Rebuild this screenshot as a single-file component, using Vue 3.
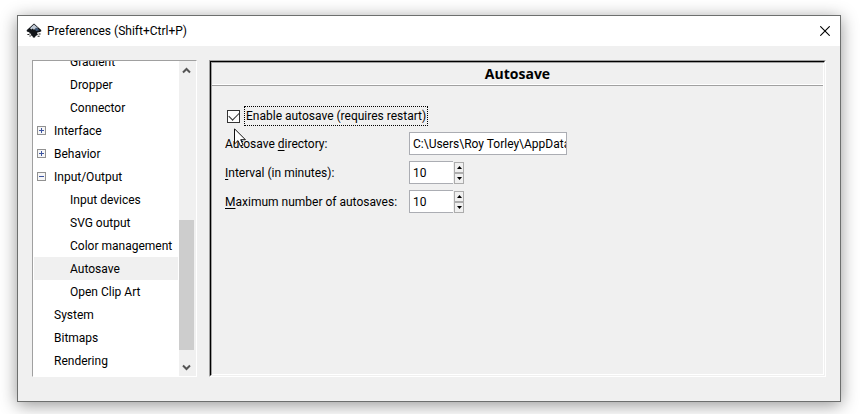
<script setup>
import { ref } from 'vue'

const items = [
  { label: 'Gradient', level: 1 },
  { label: 'Dropper', level: 1 },
  { label: 'Connector', level: 1 },
  { label: 'Interface', level: 0, state: 'closed' },
  { label: 'Behavior', level: 0, state: 'closed' },
  { label: 'Input/Output', level: 0, state: 'open' },
  { label: 'Input devices', level: 1 },
  { label: 'SVG output', level: 1 },
  { label: 'Color management', level: 1 },
  { label: 'Autosave', level: 1 },
  { label: 'Open Clip Art', level: 1 },
  { label: 'System', level: 0 },
  { label: 'Bitmaps', level: 0 },
  { label: 'Rendering', level: 0 },
]
const selected = ref('Autosave')
const enabled = ref(true)
const directory = ref('C:\\Users\\Roy Torley\\AppData\\Local')
const interval = ref('10')
const maximum = ref('10')

function step(target, delta) {
  target.value = String(Math.max(1, Number(target.value) + delta))
}
const stepInterval = (d) => step(interval, d)
const stepMaximum = (d) => step(maximum, d)
</script>

<template>
  <div class="desktop">
    <main class="window">
      <header class="titlebar">
        <svg class="logo" viewBox="0 0 16 16" aria-hidden="true">
          <path d="M8 0.4 L15.2 7 Q16 8.4 14 8.9 L11.4 9.6 Q10.4 10.3 11.6 10.8 Q12.6 11.6 11 12.2 L9.6 13 Q9.4 14.4 8 14.8 Q6.4 14.4 6.4 13 L4.6 12.2 Q4.6 11.4 5.4 11 L2.6 10 Q3 9.4 4.2 9.2 L1.4 8.8 Q0 8.2 0.9 7 Z" fill="#111418" />
          <path d="M8 1.4 L12 5.1 L10.4 6.2 L9.2 5.4 L8 7 L6.8 5.6 L5.4 6.6 L4 5.2 Z" fill="#c3ccd8" />
          <path d="M10 4.2 L13.6 7.3 L10.2 8 L9 6.6 Z" fill="#405878" />
          <path d="M1.4 11h2v1h-2zM3.4 12.6h1.4v1H3.4zM12.6 10.6h2v1h-2zM11.6 12.8h2v1h-2z" fill="#222" />
        </svg>
        <h1>Preferences (Shift+Ctrl+P)</h1>
        <button class="close" type="button" aria-label="Close">
          <svg viewBox="0 0 10 10"><path d="M0.3 0.3 L9.7 9.7 M9.7 0.3 L0.3 9.7" stroke="#000" stroke-width="1.1" fill="none" /></svg>
        </button>
      </header>

      <div class="body">
        <nav class="sidebar">
          <div class="tree">
            <button
              v-for="item in items"
              :key="item.label"
              type="button"
              class="row"
              :class="{ child: item.level, selected: item.label === selected }"
              @click="selected = item.label"
            >
              <span class="toggle">
                <svg v-if="item.state" viewBox="0 0 9 9">
                  <rect x="0.5" y="0.5" width="8" height="8" fill="#f6f6f6" stroke="#919191" />
                  <path :d="item.state === 'open' ? 'M2 4.5h5' : 'M2 4.5h5M4.5 2v5'" stroke="#3c54a0" />
                </svg>
              </span>
              <span>{{ item.label }}</span>
            </button>
          </div>
          <div class="scrollbar">
            <button type="button" class="arrow" aria-label="Scroll up">
              <svg viewBox="0 0 9 7"><path d="M1 5.5 L4.5 2 L8 5.5" stroke="#555" stroke-width="2" fill="none" /></svg>
            </button>
            <div class="track"><div class="thumb"></div></div>
            <button type="button" class="arrow" aria-label="Scroll down">
              <svg viewBox="0 0 9 7"><path d="M1 1.5 L4.5 5 L8 1.5" stroke="#555" stroke-width="2" fill="none" /></svg>
            </button>
          </div>
        </nav>

        <section class="panel">
          <div class="inner">
            <h2>Autosave</h2>
            <form class="form" @submit.prevent>
              <div class="check">
                <input id="enable" v-model="enabled" type="checkbox" />
                <label for="enable">Enable autosave (requires restart)</label>
                <svg class="pointer" viewBox="0 0 13 19" aria-hidden="true">
                  <path d="M0.5 0.8 V16 L4 12.6 L6.4 18 L9 16.9 L6.7 11.7 H11.4 Z" fill="#fff" stroke="#111" />
                </svg>
              </div>
              <div class="fields">
                <label for="dir">Autosave <u>d</u>irectory:</label>
                <input id="dir" v-model="directory" class="entry" type="text" />

                <label for="interval"><u>I</u>nterval (in minutes):</label>
                <div class="spin">
                  <input id="interval" v-model="interval" class="entry" type="text" />
                  <div class="steps">
                    <button type="button" aria-label="Increase interval" @click="stepInterval(1)"><svg viewBox="0 0 5 3"><path d="M0 3h5L2.5 0z" /></svg></button>
                    <button type="button" aria-label="Decrease interval" @click="stepInterval(-1)"><svg viewBox="0 0 5 3"><path d="M0 0h5L2.5 3z" /></svg></button>
                  </div>
                </div>

                <label for="maximum"><u>M</u>aximum number of autosaves:</label>
                <div class="spin">
                  <input id="maximum" v-model="maximum" class="entry" type="text" />
                  <div class="steps">
                    <button type="button" aria-label="Increase maximum" @click="stepMaximum(1)"><svg viewBox="0 0 5 3"><path d="M0 3h5L2.5 0z" /></svg></button>
                    <button type="button" aria-label="Decrease maximum" @click="stepMaximum(-1)"><svg viewBox="0 0 5 3"><path d="M0 0h5L2.5 3z" /></svg></button>
                  </div>
                </div>
              </div>
            </form>
          </div>
        </section>
      </div>
    </main>
  </div>
</template>

<style>
body {
  background: #fff;
}
</style>

<style scoped>
* {
  box-sizing: border-box;
}
.desktop {
  display: flex;
  min-height: 100vh;
  padding: 15px 19px 12px 17px;
  overflow: hidden;
  font: 12px/16px 'Segoe UI', Roboto, 'Open Sans', sans-serif;
  color: #000;
}
button,
input {
  font: inherit;
  color: inherit;
  margin: 0;
  padding: 0;
}
button {
  border: 0;
  background: none;
}
svg {
  display: block;
}
.window {
  flex: 1;
  display: flex;
  flex-direction: column;
  min-width: 0;
  border: 1px solid #6d6f6e;
  background: #f0f0f0;
  box-shadow: 0 3px 16px rgba(0, 0, 0, 0.42);
}
.titlebar {
  display: flex;
  align-items: center;
  height: 30px;
  padding: 0 10px 0 8px;
  background: #fff;
}
.logo {
  width: 16px;
  height: 16px;
}
h1 {
  flex: 1;
  margin: 0 0 0 5px;
  font-size: 12px;
  font-weight: 400;
}
.close svg {
  width: 10px;
  height: 10px;
}
.body {
  flex: 1;
  display: flex;
  gap: 12px;
  padding: 14px 14px 24px;
}
.sidebar {
  flex: none;
  display: flex;
  width: 165px;
  height: 317px;
  border: 1px solid;
  border-color: #a0a0a0 #fff #fff #a0a0a0;
}
.tree {
  flex: 1;
  display: flex;
  flex-direction: column;
  justify-content: flex-end;
  min-width: 0;
  padding: 0 1px 4px;
  overflow: hidden;
  background: #fff;
}
.row {
  flex: none;
  display: flex;
  align-items: center;
  height: 23px;
  padding-left: 3px;
  text-align: left;
  white-space: nowrap;
}
.row.selected {
  background: #f0f0f0;
}
.toggle {
  flex: none;
  width: 17px;
}
.child .toggle {
  width: 33px;
}
.toggle svg {
  width: 9px;
  height: 9px;
}
.scrollbar {
  flex: none;
  display: flex;
  flex-direction: column;
  width: 17px;
  padding-right: 2px;
}
.arrow {
  display: flex;
  align-items: center;
  justify-content: center;
  height: 18px;
}
.arrow svg {
  width: 9px;
  height: 7px;
}
.track {
  flex: 1;
  display: flex;
  flex-direction: column;
  justify-content: flex-end;
  padding-bottom: 8px;
}
.thumb {
  height: 48%;
  background: #cdcdcd;
}
.panel {
  flex: 1;
  display: flex;
  min-width: 0;
  border: 1px solid;
  border-color: #a0a0a0 #fff #fff #a0a0a0;
}
.inner {
  flex: 1;
  min-width: 0;
  border: 1px solid;
  border-color: #000 #f0f0f0 #f0f0f0 #000;
  box-shadow: inset 1px 1px #a0a0a0, inset -1px -1px #fff;
}
h2 {
  margin: 0 1px;
  padding: 3px 0;
  border-bottom: 1px solid #a0a0a0;
  box-shadow: inset 0 -1px #fff;
  font-family: 'Segoe UI', 'Open Sans', sans-serif;
  font-size: 14px;
  line-height: 17px;
  font-weight: 700;
  text-align: center;
}
.form {
  padding: 20px 14px;
}
.check {
  position: relative;
  display: flex;
  align-items: center;
  gap: 4px;
  padding-left: 2px;
  margin-bottom: 6px;
}
.check input {
  appearance: none;
  width: 13px;
  height: 13px;
  border: 1px solid #333;
  background: #fff;
}
.check input:checked::after {
  content: '';
  display: block;
  width: 9px;
  height: 5px;
  margin: 1px;
  border: solid #333;
  border-width: 0 0 1px 1px;
  transform: rotate(-45deg);
}
.check label {
  padding: 1px 1px;
  border: 1px dotted #000;
}
.pointer {
  position: absolute;
  left: 9px;
  top: 22px;
  width: 13px;
  height: 19px;
}
.fields {
  display: grid;
  grid-template-columns: 172px 158px;
  column-gap: 12px;
  row-gap: 6px;
  align-items: center;
}
.fields label {
  white-space: nowrap;
}
u {
  text-underline-offset: 2px;
}
.entry {
  width: 100%;
  height: 23px;
  padding: 0 0 0 3px;
  border: 1px solid #abadb3;
  border-radius: 0;
  background: #fff;
}
.spin {
  display: flex;
  align-items: center;
  gap: 1px;
}
.spin .entry {
  width: 44px;
  border-right: 0;
}
.steps {
  display: flex;
  flex-direction: column;
}
.steps button {
  display: flex;
  align-items: center;
  justify-content: center;
  width: 10px;
  height: 11px;
  border: 1px solid #acacac;
  background: #f0f0f0;
}
.steps svg {
  width: 5px;
  height: 3px;
}
</style>
